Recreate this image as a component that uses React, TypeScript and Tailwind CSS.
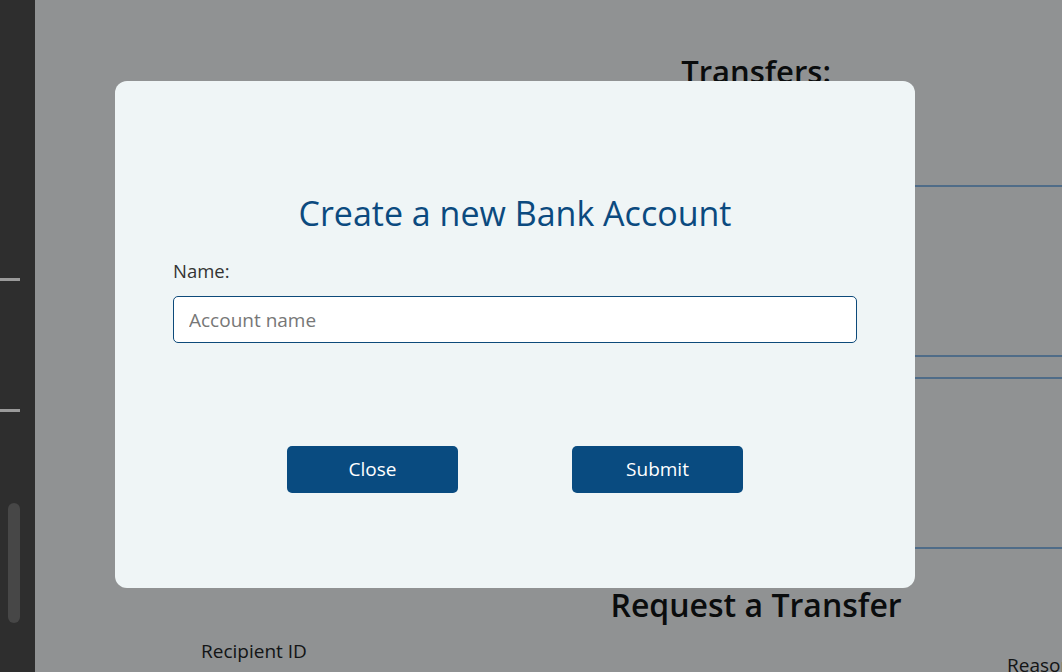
import React from "react";

export default function App() {
  const font = { fontFamily: '"Open Sans", "Noto Sans", sans-serif' };
  return (
    <div className="relative w-[1062px] h-[672px] overflow-hidden flex bg-white" style={font}>
      {/* Sidebar */}
      <aside className="w-[35px] shrink-0 bg-[#2e2e2e] flex flex-col">
        <div className="h-[278px]" />
        <div className="w-[20px] h-[3px] bg-[#9a9a9a]" />
        <div className="h-[128px]" />
        <div className="w-[20px] h-[3px] bg-[#9a9a9a]" />
        <div className="h-[91px]" />
        <div className="ml-[8px] w-[12px] h-[120px] rounded-full bg-[#474747]" />
      </aside>

      {/* Main page (behind overlay) */}
      <main className="flex-1 flex flex-col bg-white">
        <div className="flex">
          <div className="w-[405px] shrink-0" />
          <section className="flex-1 flex flex-col">
            <h2 className="mt-[51px] text-center text-[31px] font-semibold leading-[40px] text-[#111]">Transfers:</h2>
            <div className="mt-[94px] h-[172px] border-y-2 border-[#8cbbec]" />
            <div className="mt-[20px] h-[172px] border-y-2 border-[#8cbbec]" />
            <h2 className="mt-[36px] text-center text-[32px] font-semibold leading-[40px] text-[#111]">Request a Transfer</h2>
          </section>
        </div>
        <div className="flex mt-[12px]">
          <div className="w-[166px] shrink-0" />
          <span className="w-[806px] shrink-0 text-[19px] text-[#222]">Recipient ID</span>
          <span className="mt-[14px] text-[19px] text-[#222] whitespace-nowrap">Reason</span>
        </div>
      </main>

      {/* Overlay */}
      <div className="absolute inset-y-0 left-[35px] right-0 bg-[rgba(2,6,8,0.44)]" />

      {/* Modal */}
      <div className="absolute left-[115px] top-[81px] w-[800px] h-[507px] rounded-[12px] bg-[#eff5f6] flex flex-col px-[58px]">
        <h1 className="mt-[108px] text-center text-[34px] font-medium leading-[48px] text-[#0b4a7f]">Create a new Bank Account</h1>
        <label className="mt-[21px] text-[18.5px] text-[#333] leading-[26px]">Name:</label>
        <input
          className="mt-[12px] h-[47px] w-full rounded-[5px] border border-[#0d4a7a] bg-white px-[15px] text-[19px] text-[#333] placeholder:text-[#777] outline-none"
          placeholder="Account name"
          style={font}
        />
        <div className="mt-[103px] flex justify-center gap-[114px]">
          <button className="w-[171px] h-[47px] rounded-[5px] bg-[#094b80] text-white text-[19px]" style={font}>Close</button>
          <button className="w-[171px] h-[47px] rounded-[5px] bg-[#094b80] text-white text-[19px]" style={font}>Submit</button>
        </div>
      </div>
    </div>
  );
}
